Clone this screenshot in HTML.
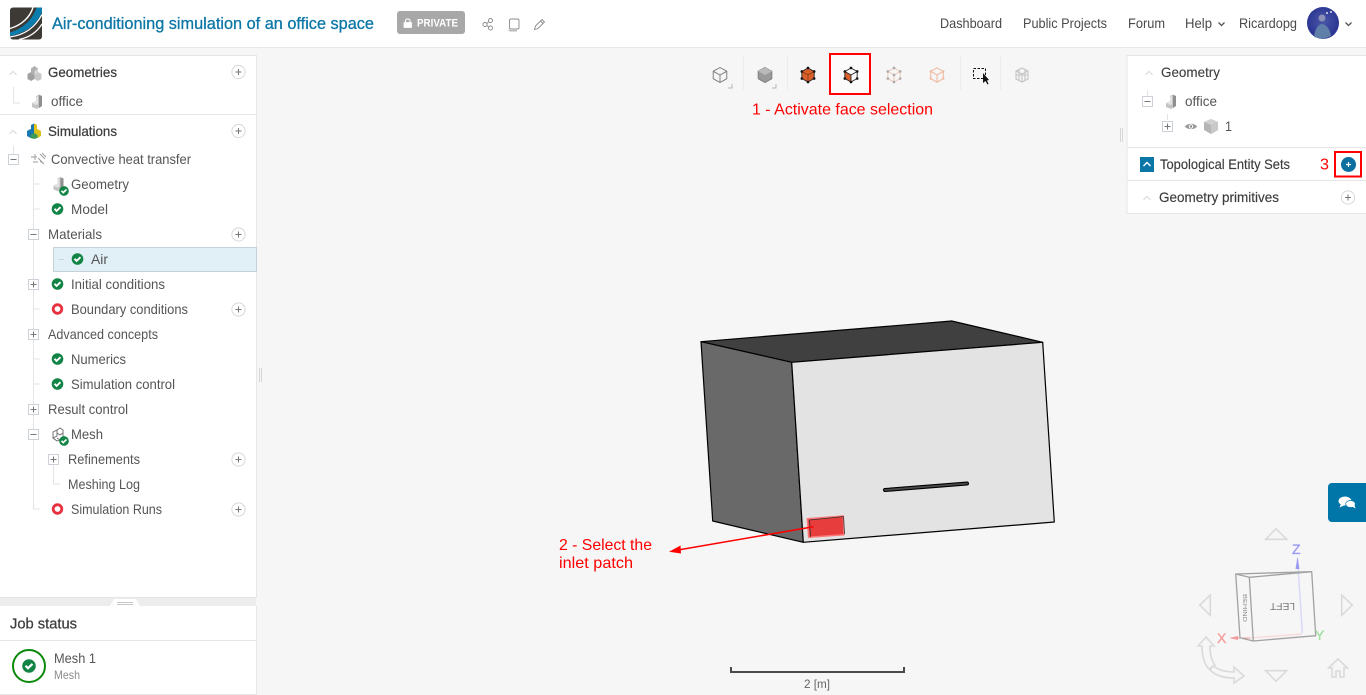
<!DOCTYPE html>
<html lang="en"><head><meta charset="utf-8"><title>Air-conditioning simulation of an office space</title>
<style>
html,body{margin:0;padding:0;background:#f6f6f6;overflow:hidden}
svg{display:block}
text{font-family:"Liberation Sans",sans-serif;font-size:14px;fill:#555}
.h{fill:#3c3c3c;stroke:#3c3c3c;stroke-width:.25}
.n{fill:#4a4a4a}
.r{fill:#f00;font-size:16px}
.l{fill:none;stroke:#e2e4e6;stroke-width:1}
</style></head><body>
<svg width="1366" height="695" viewBox="0 0 1366 695" xmlns="http://www.w3.org/2000/svg">
<defs>
<symbol id="ok" viewBox="-6 -6 12 12" overflow="visible"><circle r="5.8" fill="#128446"/><path d="M-3-.2-.9 1.9 3-1.8" fill="none" stroke="#fff" stroke-width="1.900"/></symbol>
<symbol id="err" viewBox="-6 -6 12 12" overflow="visible"><circle r="4.300" fill="none" stroke="#e8303f" stroke-width="2.800"/></symbol>
<g id="pl"><circle r="6.6" fill="#fff" stroke="#d8d8d8"/><path d="M-3 0H3M0-3V3" stroke="#777" stroke-width="1"/></g>
<g id="bp"><rect x="-5" y="-5" width="10" height="10" fill="#fff" stroke="#ccd2d8"/><path d="M-3 0H3M0-3V3" stroke="#777"/></g>
<g id="bm"><rect x="-5" y="-5" width="10" height="10" fill="#fff" stroke="#ccd2d8"/><path d="M-3 0H3" stroke="#777"/></g>
<g id="up"><path d="M-3.500 1.800 0-1.500 3.500 1.800" fill="none" stroke="#dcdcdc" stroke-width="1.200"/></g>
<g id="part"><path d="M-5 1-1-1V-6L2-7.500 5-6V4L0 7-5 5Z" fill="#c4c4c4"/><path d="M-1-1-5 1-1 3 1 2V-6L-1-5Z" fill="#e3e3e3"/><path d="M2-7V6L5 4V-6Z" fill="#8f8f8f"/></g>
<g id="hex"><path d="M0-7.500 6.800-3.700V3.700L0 7.500-6.800 3.700V-3.700Z" fill="none" stroke="#777" stroke-width=".9"/><path d="M-6.800-3.700 0 0 6.800-3.700M0 0V7.500" fill="none" stroke="#777" stroke-width=".9"/></g>
</defs>

<rect width="1366" height="695" fill="#f6f6f6"/>
<!-- header -->
<rect width="1366" height="47" fill="#fff"/><rect y="47" width="1366" height="1" fill="#e8e8e8"/>
<rect x="10" y="7.500" width="32" height="32" rx="3" fill="#3d3935"/>
<path d="M10 32.500C24 28 33 19 36.500 7.500H42V12.500C36 26 24 33.500 10 36Z" fill="#0b7cae"/>
<path d="M10 28.500C22 25 30 17 33 7.500" fill="none" stroke="#fff" stroke-width="1.400"/>
<path d="M10 37C24 35 35 28 42 14.500" fill="none" stroke="#fff" stroke-width="1.300"/>
<path d="M19 39.500C29 37.500 37 32 42 24" fill="none" stroke="#fff" stroke-width="1.200"/>
<text x="52" y="29" textLength="322" lengthAdjust="spacingAndGlyphs" style="font-size:16.500px;fill:#0d77a6;stroke:#0d77a6;stroke-width:.3">Air-conditioning simulation of an office space</text>
<rect x="397" y="11" width="68" height="23" rx="3" fill="#a8a8a8"/>
<path d="M404 22.500h7.500v5h-7.500z" fill="#fff" stroke="#fff" stroke-width=".8"/><path d="M405.500 22v-1.300a2.300 2.300 0 0 1 4.500 0v1.300" fill="none" stroke="#fff" stroke-width="1.100"/>
<text x="417" y="26.500" textLength="41" lengthAdjust="spacingAndGlyphs" style="font-size:11px;font-weight:bold;fill:#fff">PRIVATE</text>
<g fill="none" stroke="#8a8a8a" stroke-width=".9">
<circle cx="485" cy="24.500" r="2"/><circle cx="490.500" cy="20.500" r="2"/><circle cx="490.500" cy="28" r="2"/><path d="M486.800 23.500 488.800 21.700M486.800 25.500 488.800 27"/>
<path d="M511 19h6.500a1.500 1.500 0 0 1 1.500 1.500v7a1.500 1.500 0 0 1-1.500 1.500H511a1.500 1.500 0 0 1-1.500-1.500v-7A1.500 1.500 0 0 1 511 19Z"/><path d="M509 29.500a1.500 1.500 0 0 0 1.500 1.200H517" stroke="#bbb" stroke-width="1.500"/>
<path d="M534.500 29.500 535.500 26 542 19.500 544.500 22 538 28.500ZM540.500 21 543 23.500"/>
</g>
<text class="n" x="940" y="28" textLength="62" lengthAdjust="spacingAndGlyphs">Dashboard</text>
<text class="n" x="1023" y="28" textLength="84" lengthAdjust="spacingAndGlyphs">Public Projects</text>
<text class="n" x="1128" y="28" textLength="37" lengthAdjust="spacingAndGlyphs">Forum</text>
<text class="n" x="1185" y="28" textLength="27" lengthAdjust="spacingAndGlyphs">Help</text>
<text class="n" x="1239" y="28" textLength="58" lengthAdjust="spacingAndGlyphs">Ricardopg</text>
<path d="M1218.500 22.500 1221.500 25.500 1224.500 22.500M1345.500 22.500 1348.500 25.500 1351.500 22.500" fill="none" stroke="#555" stroke-width="1.300"/>
<defs><radialGradient id="av" cx=".5" cy=".45" r=".6"><stop offset="0" stop-color="#4a57a8"/><stop offset="1" stop-color="#252f8e"/></radialGradient></defs>
<circle cx="1323" cy="23" r="16" fill="url(#av)"/>
<circle cx="1322" cy="18" r="3.500" fill="#8a8fb8"/><path d="M1314 37c1-9 5-13 8-13s8 4 9 12l-8 3z" fill="#5f7fa8"/><circle cx="1331" cy="12" r="1" fill="#dde"/><circle cx="1327" cy="13" r="1" fill="#dde"/>

<!-- left panel -->
<rect x="0" y="55" width="256.500" height="543" fill="#fff"/>
<path d="M256.500 55V598M0 55.500H256.500M0 597.500H256.500M0 114.500H256.500" stroke="#e6e6e6" fill="none"/>
<use href="#up" x="13" y="73"/><use href="#up" x="13" y="132"/>
<g transform="translate(34.500 73)"><path d="M-7 1-3.500-1 0 1V6L-3.500 8-7 6Z" fill="#a0a0a0"/><path d="M0 1 3.500-1 7 1V6L3.500 8 0 6Z" fill="#c8c8c8"/><path d="M-3.500-4.500 0-7 3.500-4.500V.5L0 2.500-3.500.5Z" fill="#b0b0b0"/><path d="M0-2V2.500L3.500.5V-4.500Z" fill="#d5d5d5"/></g>
<text class="h" x="48" y="77" textLength="69" lengthAdjust="spacingAndGlyphs">Geometries</text>
<use href="#pl" x="238.500" y="72"/>
<path class="l" d="M13.500 87V103H20"/>
<use href="#part" x="37" y="102"/>
<text x="51" y="106" textLength="32" lengthAdjust="spacingAndGlyphs">office</text>

<g transform="translate(34 132)"><path d="M-3-7 0-8.500 3-7V-2L0-.5-3-2Z" fill="#1a78b0"/><path d="M0-8.500 3-7V-2L0-.5Z" fill="#e4c21b"/><path d="M-7-1-3.500-3 0-1V4L-3.500 6-7 4Z" fill="#1a78b0"/><path d="M0-1 3.500-3 7-1V4L3.500 6 0 4Z" fill="#d9c11a"/><path d="M-3.500 3 0 1 3.500 3V6L0 7-3.500 6Z" fill="#3d9a5a"/></g>
<text class="h" x="48" y="136" textLength="69" lengthAdjust="spacingAndGlyphs">Simulations</text>
<use href="#pl" x="238.500" y="131"/>
<path class="l" d="M13.500 146V154M33.500 168V509H40M34 184H40M34 209H40M34 309H40M34 359H40M34 384H40M53.500 464V484H60"/>
<use href="#bm" x="13.500" y="159.500"/>
<g fill="none" stroke="#9a9a9a" stroke-width=".9"><path d="M31 157H37M33 162H38M35 154V160M40 154 45 159M42 153 46 157M38 158 43 163M40 161 44 164"/></g>
<text x="51" y="164" textLength="140" lengthAdjust="spacingAndGlyphs">Convective heat transfer</text>

<use href="#part" x="58.500" y="184.500"/><use href="#ok" x="59" y="186" width="10" height="10"/>
<text x="71" y="189" textLength="58" lengthAdjust="spacingAndGlyphs">Geometry</text>
<use href="#ok" x="51.500" y="203" width="12" height="12"/>
<text x="71" y="214" textLength="37" lengthAdjust="spacingAndGlyphs">Model</text>
<use href="#bm" x="33.500" y="234.500"/>
<text x="48" y="239" textLength="54" lengthAdjust="spacingAndGlyphs">Materials</text>
<use href="#pl" x="238.500" y="234.500"/>
<rect x="53.500" y="247.500" width="203" height="24" fill="#e1eff7" stroke="#c7d0d8"/>
<path d="M58 259.500H64" stroke="#cfd6db"/>
<use href="#ok" x="71.500" y="253" width="12" height="12"/>
<text x="91" y="264" textLength="17" lengthAdjust="spacingAndGlyphs">Air</text>
<use href="#bp" x="33.500" y="284.500"/>
<use href="#ok" x="51.500" y="278" width="12" height="12"/>
<text x="71" y="289" textLength="94" lengthAdjust="spacingAndGlyphs">Initial conditions</text>
<use href="#err" x="51.500" y="303" width="12" height="12"/>
<text x="71" y="314" textLength="117" lengthAdjust="spacingAndGlyphs">Boundary conditions</text>
<use href="#pl" x="238.500" y="309.500"/>
<use href="#bp" x="33.500" y="334.500"/>
<text x="48" y="339" textLength="110" lengthAdjust="spacingAndGlyphs">Advanced concepts</text>
<use href="#ok" x="51.500" y="353" width="12" height="12"/>
<text x="71" y="364" textLength="55" lengthAdjust="spacingAndGlyphs">Numerics</text>
<use href="#ok" x="51.500" y="378" width="12" height="12"/>
<text x="71" y="389" textLength="104" lengthAdjust="spacingAndGlyphs">Simulation control</text>
<use href="#bp" x="33.500" y="409.500"/>
<text x="48" y="414" textLength="80" lengthAdjust="spacingAndGlyphs">Result control</text>
<use href="#bm" x="33.500" y="434.500"/>
<g fill="none" stroke="#666" stroke-width=".9"><path d="M53 432 57 430V436L53 438ZM57 430 60 428 63 430V438L60 440 57 438M53 438 57 441 60 440M57 433 60 435 63 433"/></g>
<use href="#ok" x="59" y="436" width="10" height="10"/>
<text x="71" y="439" textLength="32" lengthAdjust="spacingAndGlyphs">Mesh</text>
<use href="#bp" x="53.500" y="459.500"/>
<text x="68" y="464" textLength="72" lengthAdjust="spacingAndGlyphs">Refinements</text>
<use href="#pl" x="238.500" y="459.500"/>
<text x="68" y="489" textLength="72" lengthAdjust="spacingAndGlyphs">Meshing Log</text>
<use href="#err" x="51.500" y="503" width="12" height="12"/>
<text x="71" y="514" textLength="91" lengthAdjust="spacingAndGlyphs">Simulation Runs</text>
<use href="#pl" x="238.500" y="509.500"/>

<!-- divider + job status -->
<rect x="0" y="598" width="256" height="8" fill="#ededed"/>
<path d="M110 606 114 599H136L140 606Z" fill="#fff"/>
<path d="M117 602.500H133M117 604.500H133" stroke="#b5b5b5" stroke-width=".8"/>
<rect x="0" y="606" width="256.500" height="89" fill="#fff"/>
<path d="M256.500 606V695M0 640.500H256.500M0 694.500H256.500" stroke="#e6e6e6" fill="none"/>
<text x="10" y="628.500" textLength="67" lengthAdjust="spacingAndGlyphs" style="font-size:15px;fill:#3c3c3c;stroke:#3c3c3c;stroke-width:.25">Job status</text>
<circle cx="29" cy="666" r="16" fill="none" stroke="#0a8a0a" stroke-width="2"/>
<use href="#ok" x="22" y="659" width="14" height="14"/>
<text x="54" y="663" textLength="42" lengthAdjust="spacingAndGlyphs">Mesh 1</text>
<text x="54" y="679" textLength="26" lengthAdjust="spacingAndGlyphs" style="font-size:12px;fill:#8c8c8c">Mesh</text>

<path d="M259.500 368V382M261.500 368V382M1120.500 128V142M1122.500 128V142" stroke="#d6d6d6"/>

<!-- toolbar -->
<path d="M743.500 55V90M787.500 55V90M960.500 55V90M1000.500 55V90" stroke="#ececec"/>
<rect x="830" y="54" width="40" height="40" fill="#fbfbfb" stroke="#f00" stroke-width="2"/>
<use href="#hex" x="720" y="75"/>
<path d="M728 88H732V84M772 88H776V84" fill="none" stroke="#b5b5b5"/>
<g transform="translate(765 75)"><path d="M0-7.500 6.800-3.700V3.700L0 7.500-6.800 3.700V-3.700Z" fill="#9a9a9a" stroke="#808080"/><path d="M-6.800-3.700 0 0 6.800-3.700 0-7.500Z" fill="#bbb"/></g>
<g transform="translate(808 75) scale(.88)"><path d="M0-8 7-4V4L0 8-7 4V-4Z" fill="#d9602b" stroke="#222"/><path d="M-7-4 0 0 7-4M0 0V8" fill="none" stroke="#8c3a14"/><g fill="#111"><circle cy="-8" r="1.500"/><circle cx="7" cy="-4" r="1.500"/><circle cx="7" cy="4" r="1.500"/><circle cy="8" r="1.500"/><circle cx="-7" cy="4" r="1.500"/><circle cx="-7" cy="-4" r="1.500"/></g></g>
<g transform="translate(851 75) scale(.88)"><path d="M0 0-7-4V4L0 8Z" fill="#d9602b"/><path d="M0-8 7-4V4L0 8-7 4V-4Z" fill="none" stroke="#222"/><path d="M-7-4 0 0 7-4M0 0V8" fill="none" stroke="#222"/><g fill="#111"><circle cy="-8" r="1.500"/><circle cx="7" cy="-4" r="1.500"/><circle cx="7" cy="4" r="1.500"/><circle cy="8" r="1.500"/><circle cx="-7" cy="4" r="1.500"/><circle cx="-7" cy="-4" r="1.500"/></g></g>
<g transform="translate(894 75) scale(.88)"><path d="M0-8 7-4V4L0 8-7 4V-4ZM-7-4 0 0 7-4M0 0V8" fill="none" stroke="#efc6b3"/><g fill="#aaa"><circle cy="-8" r="1.500"/><circle cx="7" cy="-4" r="1.500"/><circle cx="7" cy="4" r="1.500"/><circle cy="8" r="1.500"/><circle cx="-7" cy="4" r="1.500"/><circle cx="-7" cy="-4" r="1.500"/><circle r="1.500"/></g></g>
<g transform="translate(937 75) scale(.9)"><path d="M0-8 7-4V4L0 8-7 4V-4ZM-7-4 0 0 7-4M0 0V8" fill="none" stroke="#efbba0" stroke-width="1.200"/><g fill="#efbba0"><circle cx="-7" cy="-4" r="1.300"/><circle cx="7" cy="4" r="1.300"/><circle cx="-7" cy="4" r="1.300"/><circle cx="7" cy="-4" r="1.300"/></g></g>
<rect x="973.500" y="68.500" width="12" height="10" fill="none" stroke="#111" stroke-dasharray="2.500 1.500"/>
<path d="M983 73 983 83 985.500 81 987.500 84.500 988.500 84 987 80.500 989 80Z" fill="#111"/>
<g transform="translate(1022 75)" fill="none" stroke="#c4c4c4" stroke-width="1.100"><path d="M0-7 6-4V4L0 7-6 4V-4ZM-3-5.500V6M3-5.500V6M-6 0 6 0M-6-4 0-1 6-4M0-1V7"/></g>
<text class="r" x="752" y="114.500" textLength="181" lengthAdjust="spacingAndGlyphs">1 - Activate face selection</text>

<!-- model -->
<path d="M701 341.700 791.700 362.300 1042.700 342.300 951.700 321Z" fill="#404040" stroke="#000" stroke-width="1.200" stroke-linejoin="round"/>
<path d="M701 341.700 791.700 362.300 803.300 542.300 712.700 521Z" fill="#696969" stroke="#000" stroke-width="1.200" stroke-linejoin="round"/>
<path d="M791.700 362.300 1042.700 342.300 1054.300 522 803.300 542.300Z" fill="#e3e3e3" stroke="#000" stroke-width="1.200" stroke-linejoin="round"/>
<path d="M885 490 967 483.500" stroke="#000" stroke-width="4" stroke-linecap="round"/>
<path d="M885 490 967 483.500" stroke="#4a4a4a" stroke-width="1.800" stroke-linecap="round"/>
<path d="M807.300 518.700 843.300 516 844 534.700 808.700 537.300Z" fill="#e83d3d" stroke="#ff7878" stroke-width="1.500" stroke-linejoin="round"/>
<path d="M809.500 520 843.500 516.500M809.500 520 810.500 537M843.500 516.500 844.500 534" fill="none" stroke="#333" stroke-width=".8"/>
<path d="M813.500 526.700 678 550" stroke="#f00" stroke-width="1.500" fill="none"/>
<path d="M669 551.700 680.500 545.500 681 553.500Z" fill="#f00"/>
<text class="r" x="559" y="550" textLength="93" lengthAdjust="spacingAndGlyphs">2 - Select the</text>
<text class="r" x="559" y="568" textLength="74" lengthAdjust="spacingAndGlyphs">inlet patch</text>

<!-- scale -->
<path d="M731 667V672H904V667" fill="none" stroke="#4a4a4a" stroke-width="2"/>
<text x="804" y="688" textLength="26" lengthAdjust="spacingAndGlyphs" style="font-size:12px;fill:#666">2 [m]</text>

<!-- right panel -->
<rect x="1127" y="55.500" width="239.500" height="158" fill="#fff" stroke="#e6e6e6"/>
<path d="M1127 147.500H1366M1127 180.500H1366" stroke="#e6e6e6"/>
<use href="#up" x="1149" y="73"/>
<text class="h" x="1161" y="77" textLength="59" lengthAdjust="spacingAndGlyphs" style="stroke-width:.1">Geometry</text>
<path class="l" d="M1147.500 90V96M1167.500 114V120"/>
<use href="#bm" x="1147.500" y="101.500"/>
<use href="#part" x="1171" y="102"/>
<text x="1185" y="106" textLength="32" lengthAdjust="spacingAndGlyphs">office</text>
<use href="#bp" x="1167.500" y="126.500"/>
<path d="M1185 126.500C1187 123 1195 123 1197 126.500 1195 130 1187 130 1185 126.500Z" fill="#999"/><circle cx="1191" cy="126.500" r="2.200" fill="#fff"/><circle cx="1191" cy="126.500" r="1.200" fill="#888"/>
<path d="M1204 122 1211 119 1218 122 1218 130 1211 134 1204 130Z" fill="#b5b5b5"/><path d="M1204 122 1211 119 1218 122 1211 125Z" fill="#d0d0d0"/><path d="M1211 125 1218 122V130L1211 134Z" fill="#c8c8c8"/>
<text x="1225" y="131" textLength="7" lengthAdjust="spacingAndGlyphs">1</text>
<rect x="1140" y="157" width="14" height="15" fill="#0b77a6"/>
<path d="M1143.500 166 1147 162.500 1150.500 166" fill="none" stroke="#fff" stroke-width="1.400"/>
<text class="h" x="1160" y="169" textLength="130" lengthAdjust="spacingAndGlyphs" style="stroke-width:.15">Topological Entity Sets</text>
<text x="1320" y="169.500" textLength="9" lengthAdjust="spacingAndGlyphs" style="font-size:16px;fill:#f00">3</text>
<rect x="1335" y="152" width="26" height="24.500" fill="#fff" stroke="#f00" stroke-width="2"/>
<circle cx="1348.500" cy="164.500" r="7.500" fill="#0b6fa0"/><path d="M1346 164.500H1351M1348.500 162V167" stroke="#fff" stroke-width="1.200"/>
<use href="#up" x="1147" y="198"/>
<text class="h" x="1159" y="202" textLength="120" lengthAdjust="spacingAndGlyphs" style="stroke-width:.15">Geometry primitives</text>
<use href="#pl" x="1348" y="197.500"/>

<!-- chat -->
<path d="M1332 483H1366V522H1332A4 4 0 0 1 1328 518V487A4 4 0 0 1 1332 483Z" fill="#0076a8"/>
<ellipse cx="1345" cy="501" rx="6.500" ry="4.500" fill="#fff"/><path d="M1341 504 1339.500 507.500 1345 505Z" fill="#fff"/>
<ellipse cx="1350.500" cy="504" rx="4.800" ry="3.500" fill="#fff" stroke="#0076a8" stroke-width=".7"/><path d="M1352 506.500 1355.500 508.500 1354.500 505Z" fill="#fff"/>

<!-- view cube -->
<g fill="none" stroke="#dadada" stroke-width="1.600">
<path d="M1265.700 539.300 1276 528.700 1286.700 539.300Z"/>
<path d="M1265.700 670.700H1286.700L1276 681.300Z"/>
<path d="M1210.300 595 1199.700 605 1210.300 615.300Z"/>
<path d="M1341.700 595 1352.300 605 1341.700 615.300Z"/>
<path d="M1338 659 1328.500 668H1332V677H1336V671H1340V677H1344V668H1347.500Z"/>
<path d="M1198 646 1206 637 1214 646H1210C1210 654 1211 660 1215 665L1209 669C1203 663 1202 654 1202 646Z"/>
<path d="M1213 666C1220 671 1227 672 1234 672V667L1244 676 1234 683V678C1224 678 1216 676 1210 670Z"/>
</g>
<path d="M1302.300 633 1297.500 558" stroke="#d8d8f8" stroke-width="1.500"/>
<path d="M1297.500 557 1295.500 569H1299.500Z" fill="#9a9af5"/>
<path d="M1302 634 1250 638" stroke="#f8dcdc" stroke-width="1.500"/>
<path d="M1229 638 1238 636V640Z" fill="#f59a9a"/><path d="M1238 638H1250" stroke="#f59a9a"/>
<g fill="none" stroke="#a2a2a2" stroke-width="1.300" stroke-linejoin="round">
<path d="M1235.700 574 1311.700 571.700 1315.700 635.700 1253.300 641 1240 637.700Z"/>
<path d="M1235.700 574 1249.300 577.300 1311.700 571.700M1249.300 577.300 1253.300 641"/>
</g>
<text transform="translate(1295 603) rotate(180)" x="0" y="0" textLength="25" lengthAdjust="spacingAndGlyphs" style="font-size:10px;fill:#777">LEFT</text>
<text transform="translate(1243 594) rotate(90)" x="0" y="0" textLength="28" lengthAdjust="spacingAndGlyphs" style="font-size:5px;fill:#888">BEHIND</text>
<text x="1292" y="554" style="font-size:14px;fill:#9a9af5;stroke:#9a9af5;stroke-width:.3">Z</text>
<text x="1217" y="643" style="font-size:14px;fill:#f59a9a;stroke:#f59a9a;stroke-width:.3">X</text>
<text x="1315" y="640" style="font-size:14px;fill:#9fe09f;stroke:#9fe09f;stroke-width:.3">Y</text>
</svg>
</body></html>
